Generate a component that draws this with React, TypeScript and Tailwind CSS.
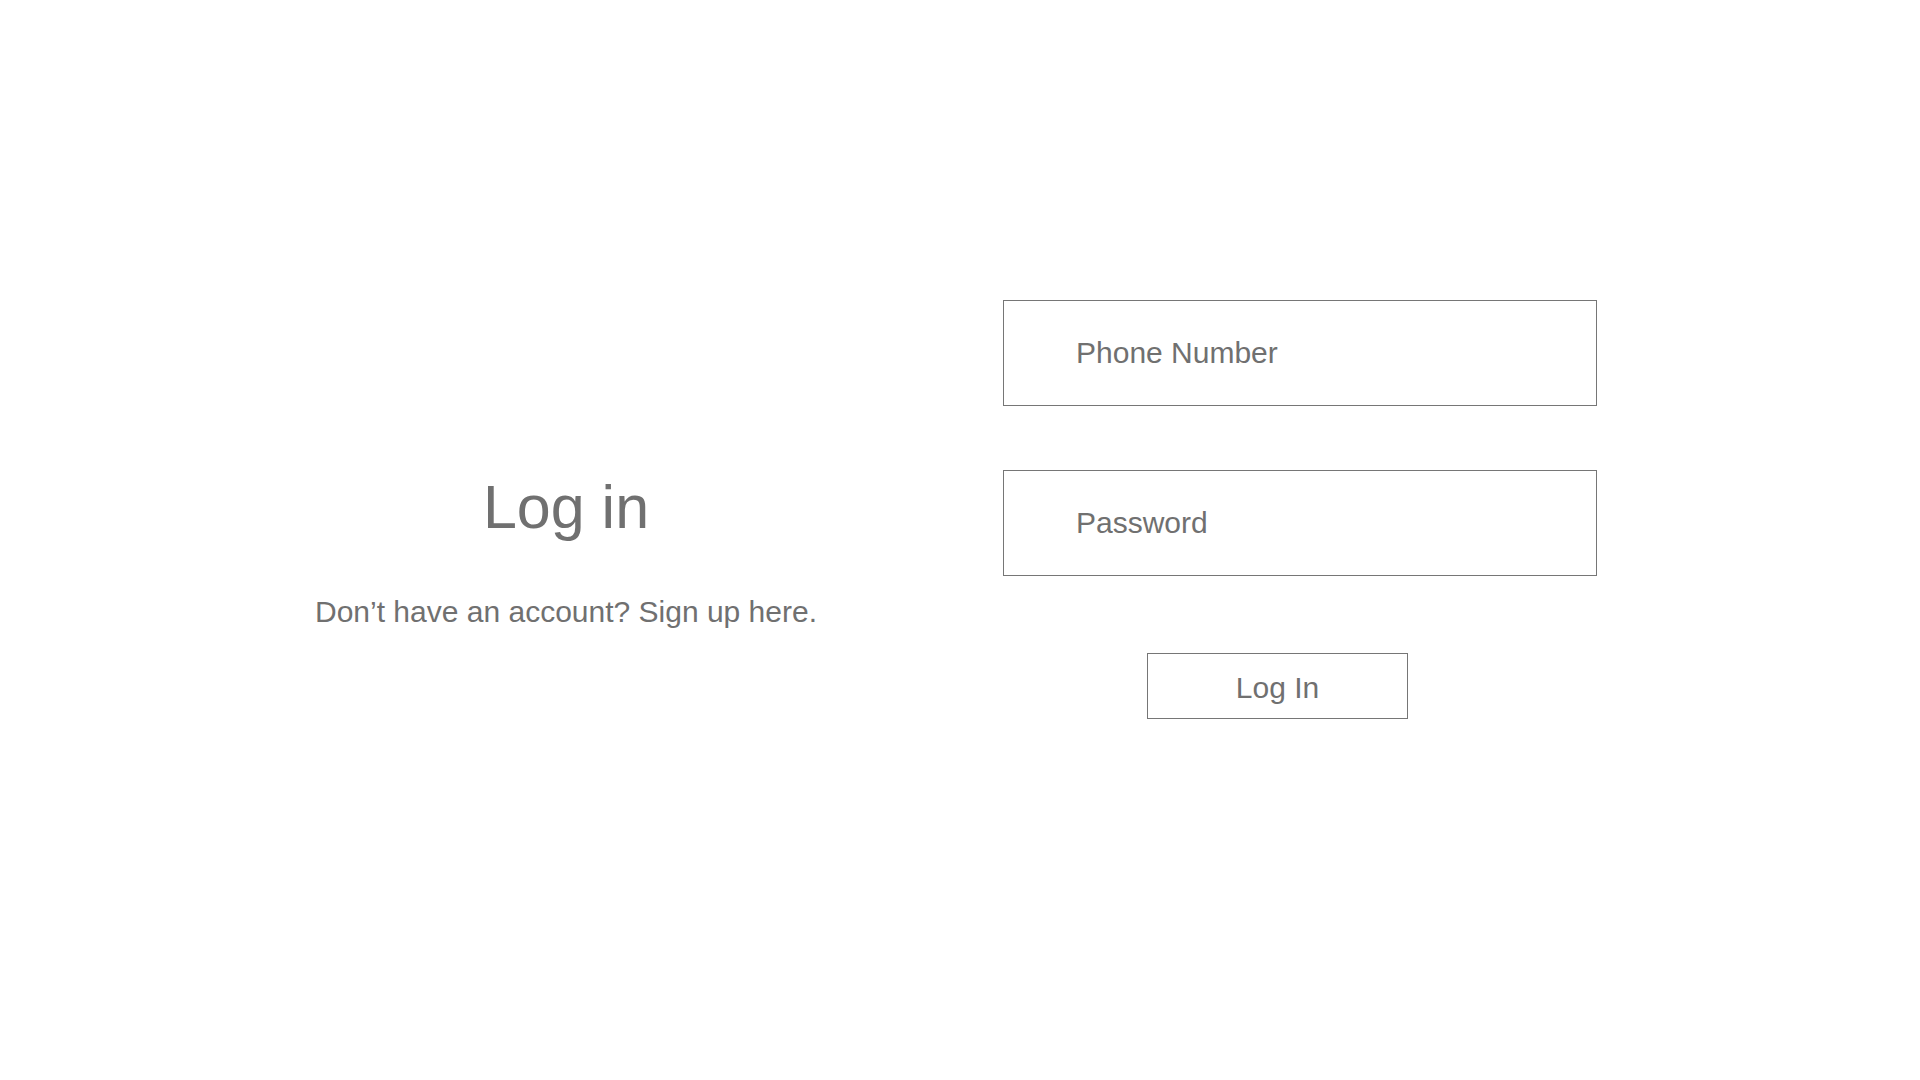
export default function App() {
  return (
    <div
      className="w-[1920px] h-[1080px] bg-white text-[#707070] flex items-start"
      style={{ fontFamily: '"Liberation Sans", Arial, sans-serif' }}
    >
      {/* Heading column */}
      <div className="ml-[266px] w-[600px] pt-[477px] flex flex-col items-center">
        <h1 className="text-[61px] leading-none font-normal">Log in</h1>
        <p className="mt-[59px] text-[30px] leading-none">
          Don’t have an account? Sign up here.
        </p>
      </div>

      {/* Form column */}
      <form
        className="ml-[137px] w-[594px] pt-[300px] flex flex-col"
        onSubmit={(e) => e.preventDefault()}
      >
        <input
          type="tel"
          placeholder="Phone Number"
          className="h-[106px] w-full border border-[#767676] pl-[72px] text-[30px] leading-none outline-none placeholder:text-[#707070]"
        />
        <input
          type="password"
          placeholder="Password"
          className="mt-[64px] h-[106px] w-full border border-[#767676] pl-[72px] text-[30px] leading-none outline-none placeholder:text-[#707070]"
        />
        <button
          type="submit"
          className="mt-[77px] ml-[144px] h-[66px] w-[261px] border border-[#767676] pt-[3px] text-[30px] leading-none text-[#707070]"
        >
          Log In
        </button>
      </form>
    </div>
  );
}
